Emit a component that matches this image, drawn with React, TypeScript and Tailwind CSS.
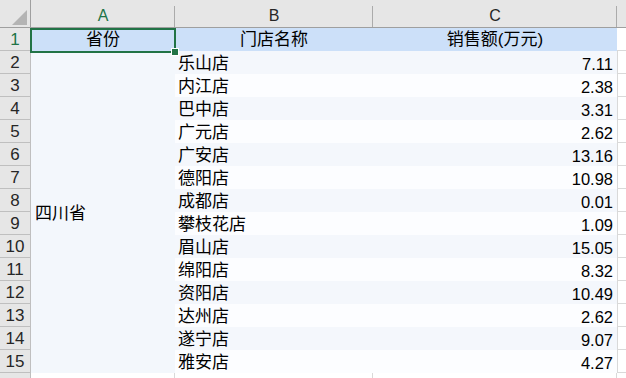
import React from 'react';

const rows: { name: string; sales: string }[] = [
  { name: '乐山店', sales: '7.11' },
  { name: '内江店', sales: '2.38' },
  { name: '巴中店', sales: '3.31' },
  { name: '广元店', sales: '2.62' },
  { name: '广安店', sales: '13.16' },
  { name: '德阳店', sales: '10.98' },
  { name: '成都店', sales: '0.01' },
  { name: '攀枝花店', sales: '1.09' },
  { name: '眉山店', sales: '15.05' },
  { name: '绵阳店', sales: '8.32' },
  { name: '资阳店', sales: '10.49' },
  { name: '达州店', sales: '2.62' },
  { name: '遂宁店', sales: '9.07' },
  { name: '雅安店', sales: '4.27' },
];

const font = { fontFamily: '"Liberation Sans", "Noto Sans CJK SC", sans-serif' };

function ColHeader({ label, active, last }: { label?: string; active?: boolean; last?: boolean }) {
  return (
    <div className="relative flex items-center justify-center border-b border-[#9f9f9f] bg-[#e6e6e6] pt-[5px] text-[16px]">
      <span className={active ? 'text-[#217346]' : 'text-[#262626]'}>{label}</span>
      {!last && <div className="absolute right-0 top-[6px] bottom-0 w-px bg-[#ababab]" />}
    </div>
  );
}

function RowHeader({ n, active }: { n?: number; active?: boolean }) {
  return (
    <div
      className={`flex items-center justify-center border-b border-r border-[#bfbfbf] bg-[#e6e6e6] pt-[1px] text-[17px] ${
        active ? 'text-[#217346]' : 'text-[#262626]'
      }`}
    >
      {n}
    </div>
  );
}

export default function App() {
  return (
    <div className="h-[378px] w-[626px] overflow-hidden bg-white text-black" style={font}>
      <div className="grid grid-cols-[31px_144px_198px_244px_1fr] grid-rows-[28px_repeat(15,23px)_23px]">
        {/* column headers */}
        <div className="relative border-b border-r border-[#9f9f9f] bg-[#e6e6e6]">
          <svg className="absolute left-[12px] top-[10px]" width="15" height="15" viewBox="0 0 15 15">
            <polygon points="15,0 15,15 0,15" fill="#b4b4b4" />
          </svg>
        </div>
        <ColHeader label="A" active />
        <ColHeader label="B" />
        <ColHeader label="C" />
        <ColHeader last />

        {/* row 1 */}
        <RowHeader n={1} active />
        <div className="relative flex items-center justify-center bg-[#cce0f9] pt-[1px] text-[17px]">
          省份
          <div className="absolute -left-px top-0 -right-px -bottom-[2px] border-2 border-[#217346]">
            <div className="absolute -right-[4px] -bottom-[4px] h-[6px] w-[6px] bg-[#217346] outline outline-1 outline-white" />
          </div>
        </div>
        <div className="flex items-center justify-center bg-[#cce0f9] pt-[1px] text-[17px]">门店名称</div>
        <div className="flex items-center justify-center bg-[#cce0f9] pt-[1px] text-[17px]">销售额(万元)</div>
        <div className="border-b border-[#d9d9d9]" />

        {/* data rows */}
        {rows.map((r, i) => (
          <React.Fragment key={r.name}>
            <RowHeader n={i + 2} />
            {i === 0 && (
              <div className="row-span-14 flex items-center bg-[#f3f7fc] pl-[4px] pt-[4px] text-[17px]">四川省</div>
            )}
            <div
              className={`flex items-center pl-[3px] pt-[2px] text-[17px] ${
                i % 2 === 0 ? 'bg-[#f4f7fc]' : 'bg-[#fcfdff]'
              }`}
            >
              {r.name}
            </div>
            <div
              className={`flex items-center justify-end pr-[4px] pt-[3px] text-[16.5px] ${
                i % 2 === 0 ? 'bg-[#f4f7fc]' : 'bg-[#fcfdff]'
              }`}
            >
              {r.sales}
            </div>
            <div className="border-b border-l border-[#d9d9d9]" />
          </React.Fragment>
        ))}

        {/* row 16, only its top edge shows */}
        <RowHeader />
        <div className="border-r border-[#d9d9d9]" />
        <div className="border-r border-[#d9d9d9]" />
        <div className="border-r border-[#d9d9d9]" />
        <div />
      </div>
    </div>
  );
}
